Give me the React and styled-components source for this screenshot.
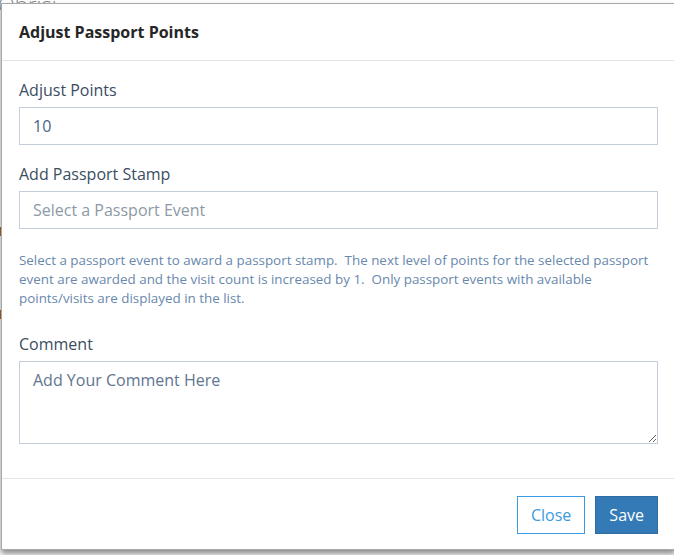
import React, { useState } from 'react';
import styled, { createGlobalStyle } from 'styled-components';

const GlobalStyle = createGlobalStyle`
  html, body {
    margin: 0;
    padding: 0;
    height: 100%;
    background: #fff;
    overflow: hidden;
    font-family: "Open Sans", "Noto Sans", "Liberation Sans", sans-serif;
  }
  #root {
    height: 100%;
  }
  * {
    box-sizing: border-box;
  }
`;

const Page = styled.div`
  position: relative;
  height: 100%;
  overflow: hidden;
`;

const PageTitle = styled.div`
  margin: -11px 0 0 -2px;
  font-size: 22px;
  color: #8a8a8a;
  font-weight: 300;
`;

const PageMark = styled.div`
  width: 2px;
  height: 9px;
  margin-top: ${(p) => p.top}px;
  background: #b06a2a;
`;

const Modal = styled.div`
  position: absolute;
  top: 3px;
  left: 1px;
  width: 675px;
  background: #fff;
  border: 1px solid #a8a8a8;
  box-shadow: 0 4px 6px rgba(0, 0, 0, 0.45);
  display: flex;
  flex-direction: column;
`;

const Header = styled.div`
  padding: 18px 17px 17px;
  border-bottom: 1px solid #e5e5e5;
`;

const Title = styled.h4`
  margin: 0;
  font-size: 16px;
  line-height: 21px;
  font-weight: 700;
  color: #262626;
`;

const Body = styled.div`
  padding: 18px 17px 16px;
  display: flex;
  flex-direction: column;
`;

const Group = styled.div`
  display: flex;
  flex-direction: column;
  margin-bottom: 18px;
`;

const Label = styled.label`
  font-size: 16px;
  line-height: 22px;
  color: #3c4d5f;
  margin-bottom: 6px;
`;

const Input = styled.input`
  height: 38px;
  width: 100%;
  border: 1px solid #c4cdd9;
  padding: 0 13px;
  font-family: inherit;
  font-size: 16px;
  color: #4a6585;
  outline: none;
  &::placeholder {
    color: #8d99a6;
  }
`;

const Help = styled.p`
  margin: 4px 0 25px;
  font-size: 13.4px;
  line-height: 19px;
  color: #6888ad;
`;

const TextArea = styled.textarea`
  height: 83px;
  width: 100%;
  border: 1px solid #c4cdd9;
  padding: 7px 13px;
  font-family: inherit;
  font-size: 16px;
  line-height: 22px;
  color: #4a6585;
  resize: vertical;
  outline: none;
  &::placeholder {
    color: #5f7590;
  }
`;

const Footer = styled.div`
  border-top: 1px solid #e5e5e5;
  padding: 17px 17px 15px;
  display: flex;
  justify-content: flex-end;
  gap: 10px;
`;

const Button = styled.button`
  height: 38px;
  padding: 0 13px;
  font-family: inherit;
  font-size: 16px;
  cursor: pointer;
  border: 1px solid ${(p) => (p.primary ? '#2e6da4' : '#3a9be0')};
  background: ${(p) => (p.primary ? '#337ab7' : '#fff')};
  color: ${(p) => (p.primary ? '#fff' : '#3a9be0')};
`;

export default function App() {
  const [points, setPoints] = useState('10');
  const [comment, setComment] = useState('');

  return (
    <>
      <GlobalStyle />
      <Page>
        <PageTitle>Obrisi</PageTitle>
        <PageMark top={208} />
        <PageMark top={74} />
        <Modal>
          <Header>
            <Title>Adjust Passport Points</Title>
          </Header>
          <Body>
            <Group>
              <Label>Adjust Points</Label>
              <Input value={points} onChange={(e) => setPoints(e.target.value)} />
            </Group>
            <Group>
              <Label>Add Passport Stamp</Label>
              <Input placeholder="Select a Passport Event" readOnly />
            </Group>
            <Help>
              Select a passport event to award a passport stamp.&nbsp; The next level of points for the
              selected passport event are awarded and the visit count is increased by 1.&nbsp; Only
              passport events with available points/visits are displayed in the list.
            </Help>
            <Group>
              <Label>Comment</Label>
              <TextArea
                placeholder="Add Your Comment Here"
                value={comment}
                onChange={(e) => setComment(e.target.value)}
              />
            </Group>
          </Body>
          <Footer>
            <Button>Close</Button>
            <Button primary>Save</Button>
          </Footer>
        </Modal>
      </Page>
    </>
  );
}
